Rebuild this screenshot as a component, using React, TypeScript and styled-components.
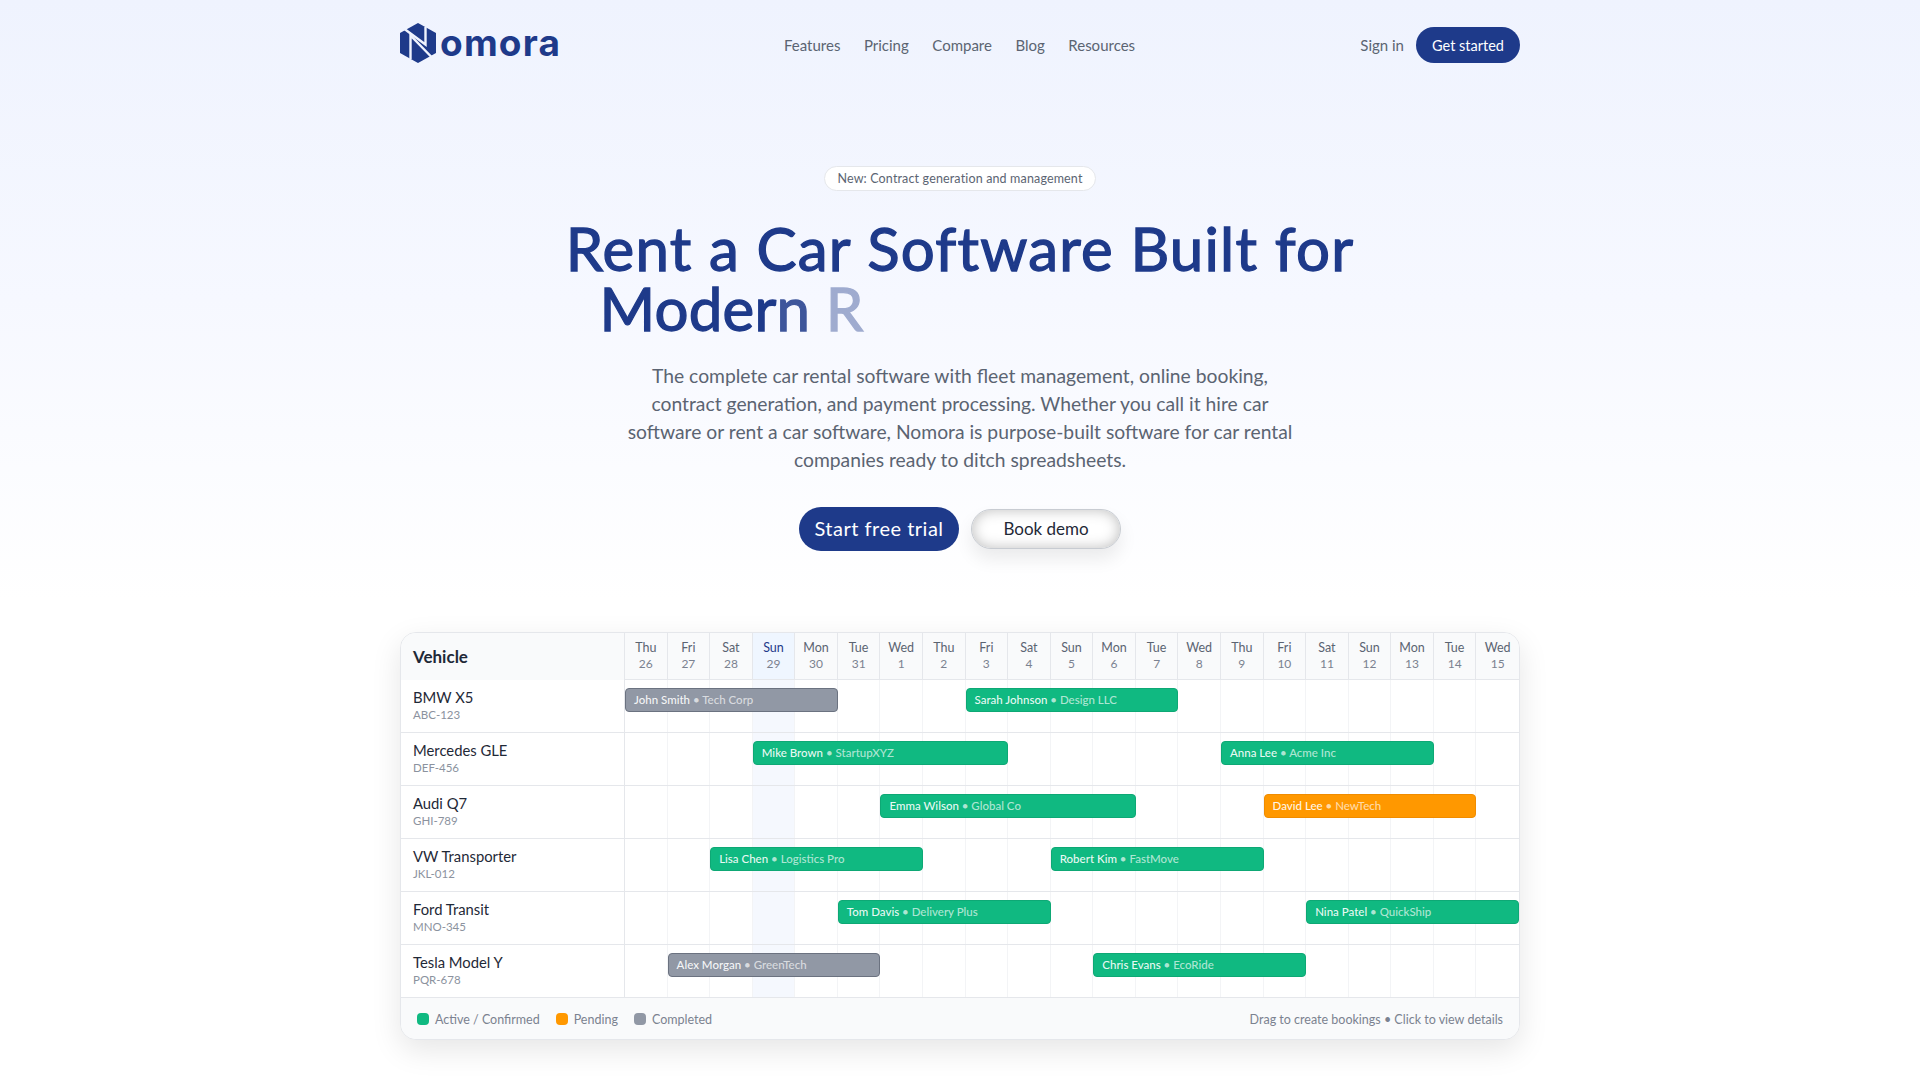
import React from "react";
import styled, { createGlobalStyle } from "styled-components";

const GlobalStyle = createGlobalStyle`
  html, body {
    margin: 0;
    padding: 0;
    background: #fff;
    overflow: hidden;
  }
  body {
    font-family: "Lato", "Open Sans", sans-serif;
    color: #111827;
  }
  * {
    box-sizing: border-box;
  }
`;

type Tone = "green" | "orange" | "gray";

const navLinks = ["Features", "Pricing", "Compare", "Blog", "Resources"];

const days = [
  ["Thu", "26"],
  ["Fri", "27"],
  ["Sat", "28"],
  ["Sun", "29"],
  ["Mon", "30"],
  ["Tue", "31"],
  ["Wed", "1"],
  ["Thu", "2"],
  ["Fri", "3"],
  ["Sat", "4"],
  ["Sun", "5"],
  ["Mon", "6"],
  ["Tue", "7"],
  ["Wed", "8"],
  ["Thu", "9"],
  ["Fri", "10"],
  ["Sat", "11"],
  ["Sun", "12"],
  ["Mon", "13"],
  ["Tue", "14"],
  ["Wed", "15"],
];

const TODAY = 3;

type Booking = { start: number; span: number; name: string; company: string; tone: Tone };

const vehicles: { name: string; plate: string; bookings: Booking[] }[] = [
  {
    name: "BMW X5",
    plate: "ABC-123",
    bookings: [
      { start: 0, span: 5, name: "John Smith", company: "Tech Corp", tone: "gray" },
      { start: 8, span: 5, name: "Sarah Johnson", company: "Design LLC", tone: "green" },
    ],
  },
  {
    name: "Mercedes GLE",
    plate: "DEF-456",
    bookings: [
      { start: 3, span: 6, name: "Mike Brown", company: "StartupXYZ", tone: "green" },
      { start: 14, span: 5, name: "Anna Lee", company: "Acme Inc", tone: "green" },
    ],
  },
  {
    name: "Audi Q7",
    plate: "GHI-789",
    bookings: [
      { start: 6, span: 6, name: "Emma Wilson", company: "Global Co", tone: "green" },
      { start: 15, span: 5, name: "David Lee", company: "NewTech", tone: "orange" },
    ],
  },
  {
    name: "VW Transporter",
    plate: "JKL-012",
    bookings: [
      { start: 2, span: 5, name: "Lisa Chen", company: "Logistics Pro", tone: "green" },
      { start: 10, span: 5, name: "Robert Kim", company: "FastMove", tone: "green" },
    ],
  },
  {
    name: "Ford Transit",
    plate: "MNO-345",
    bookings: [
      { start: 5, span: 5, name: "Tom Davis", company: "Delivery Plus", tone: "green" },
      { start: 16, span: 5, name: "Nina Patel", company: "QuickShip", tone: "green" },
    ],
  },
  {
    name: "Tesla Model Y",
    plate: "PQR-678",
    bookings: [
      { start: 1, span: 5, name: "Alex Morgan", company: "GreenTech", tone: "gray" },
      { start: 11, span: 5, name: "Chris Evans", company: "EcoRide", tone: "green" },
    ],
  },
];

const toneColors: Record<Tone, { bg: string; border: string }> = {
  green: { bg: "#10b981", border: "#0ea875" },
  orange: { bg: "#ff9800", border: "#f08c00" },
  gray: { bg: "#9198a5", border: "#6b7280" },
};

function LogoMark() {
  return (
    <svg width="36" height="40" viewBox="0 0 36 40" aria-hidden="true">
      <path d="M18 0 36 10V30L18 40 0 30V10Z" fill="#1e3a8a" />
      <path d="M4.5 6 25.5 21.5V4" fill="none" stroke="#eff3fe" strokeWidth="2.4" />
      <path d="M10.5 36V12.5L31.5 34" fill="none" stroke="#eff3fe" strokeWidth="2.4" />
    </svg>
  );
}

export default function App() {
  return (
    <Page>
      <GlobalStyle />
      <Wrap>
        <Nav>
          <Logo>
            <LogoMark />
            <LogoWord>omora</LogoWord>
          </Logo>
          <NavLinks>
            {navLinks.map((link) => (
              <NavLink key={link}>{link}</NavLink>
            ))}
          </NavLinks>
          <NavActions>
            <NavLink>Sign in</NavLink>
            <GetStarted>Get started</GetStarted>
          </NavActions>
        </Nav>

        <Hero>
          <Pill>New: Contract generation and management</Pill>
          <Heading>
            <HeadingLine>Rent a Car Software Built for</HeadingLine>
            <TypedLine>
              Moder
              <FadeN>n</FadeN>
              <FadeR> R</FadeR>
              <TypingGap />
            </TypedLine>
          </Heading>
          <Lead>
            The complete car rental software with fleet management, online booking,
            <br />
            contract generation, and payment processing. Whether you call it hire car
            <br />
            software or rent a car software, Nomora is purpose-built software for car rental
            <br />
            companies ready to ditch spreadsheets.
          </Lead>
          <Actions>
            <PrimaryButton>Start free trial</PrimaryButton>
            <GhostButton>Book demo</GhostButton>
          </Actions>
        </Hero>

        <Gantt>
          <HeaderRow>
            <VehicleHead>Vehicle</VehicleHead>
            <Timeline>
              {days.map(([day, num], i) => (
                <DayCell key={`${day}${num}`} $today={i === TODAY}>
                  <DayName $today={i === TODAY}>{day}</DayName>
                  <DayNum>{num}</DayNum>
                </DayCell>
              ))}
            </Timeline>
          </HeaderRow>
          {vehicles.map((vehicle) => (
            <Row key={vehicle.plate}>
              <VehicleCell>
                <VehicleName>{vehicle.name}</VehicleName>
                <Plate>{vehicle.plate}</Plate>
              </VehicleCell>
              <Timeline>
                {days.map(([day, num], i) => (
                  <GridCell key={`${day}${num}`} $col={i} $today={i === TODAY} />
                ))}
                {vehicle.bookings.map((b) => (
                  <Bar key={b.name} $tone={b.tone} $start={b.start} $span={b.span}>
                    {b.name}
                    <Company> • {b.company}</Company>
                  </Bar>
                ))}
              </Timeline>
            </Row>
          ))}
          <Legend>
            <LegendItems>
              <LegendItem>
                <Swatch $tone="green" />
                Active / Confirmed
              </LegendItem>
              <LegendItem>
                <Swatch $tone="orange" />
                Pending
              </LegendItem>
              <LegendItem>
                <Swatch $tone="gray" />
                Completed
              </LegendItem>
            </LegendItems>
            <LegendHint>Drag to create bookings • Click to view details</LegendHint>
          </Legend>
        </Gantt>
      </Wrap>
    </Page>
  );
}

const Page = styled.div`
  height: 1080px;
  overflow: hidden;
  background: linear-gradient(180deg, #eff3fe 0%, #f6f8ff 300px, #ffffff 600px);
`;

const Wrap = styled.div`
  width: 1120px;
  margin: 0 auto;
`;

const Nav = styled.nav`
  display: grid;
  grid-template-columns: 384px 1fr auto;
  align-items: center;
  height: 90px;
`;

const Logo = styled.div`
  display: flex;
  align-items: center;
  gap: 4px;
  margin-top: -4px;
`;

const LogoWord = styled.span`
  font-family: "Inter", sans-serif;
  font-size: 37px;
  font-weight: 700;
  line-height: 40px;
  color: #1e3a8a;
  letter-spacing: 1.2px;
`;

const NavLinks = styled.div`
  display: flex;
  align-items: center;
  gap: 23.5px;
`;

const NavLink = styled.a`
  font-size: 15px;
  color: #5b6472;
`;

const NavActions = styled.div`
  display: flex;
  align-items: center;
  gap: 12px;
`;

const GetStarted = styled.button`
  width: 104px;
  height: 36px;
  border: 0;
  border-radius: 18px;
  background: #1e3a8a;
  color: #fff;
  font-family: inherit;
  font-size: 14.5px;
`;

const Hero = styled.section`
  display: flex;
  flex-direction: column;
  align-items: center;
  padding-top: 76px;
`;

const Pill = styled.div`
  height: 25px;
  display: flex;
  align-items: center;
  padding: 0 12px;
  border: 1px solid #e5e7eb;
  border-radius: 13px;
  background: #fff;
  font-size: 12.5px;
  color: #5b6472;
  letter-spacing: 0.15px;
`;

const Heading = styled.h1`
  width: 100%;
  margin: 27px 0 0;
  text-align: center;
  font-size: 60px;
  line-height: 60px;
  font-weight: 400;
  letter-spacing: 1.2px;
  color: #1e3a8a;
  -webkit-text-stroke: 1.3px #1e3a8a;
`;

const HeadingLine = styled.span`
  display: block;
`;

const TypedLine = styled(HeadingLine)`
  letter-spacing: 0.2px;
`;

const FadeN = styled.span`
  opacity: 0.85;
`;

const FadeR = styled.span`
  opacity: 0.4;
`;

const TypingGap = styled.span`
  display: inline-block;
  width: 457px;
`;

const Lead = styled.p`
  margin: 24px 0 0;
  text-align: center;
  font-size: 19.3px;
  line-height: 28px;
  color: #5b6472;
`;

const Actions = styled.div`
  display: flex;
  align-items: center;
  gap: 12px;
  margin-top: 33px;
`;

const PrimaryButton = styled.button`
  width: 160px;
  height: 44px;
  padding: 0 0 2px;
  border: 0;
  border-radius: 22px;
  background: #1e3a8a;
  color: #fff;
  font-family: inherit;
  font-size: 20px;
  letter-spacing: 0.5px;
`;

const GhostButton = styled.button`
  width: 150px;
  height: 40px;
  padding: 0 0 2px;
  border: 1px solid #c8ccd2;
  border-radius: 20px;
  background: #fff;
  color: #1f2937;
  font-family: inherit;
  font-size: 17px;
  box-shadow: inset 0 0 14px rgba(0, 0, 0, 0.26), 0 10px 18px rgba(0, 0, 0, 0.08);
`;

const Gantt = styled.section`
  margin-top: 81px;
  height: 408px;
  border: 1px solid #e5e7eb;
  border-radius: 16px;
  overflow: hidden;
  background: #fff;
  box-shadow: 0 10px 30px rgba(0, 0, 0, 0.1);
`;

const HeaderRow = styled.div`
  display: grid;
  grid-template-columns: 224px 1fr;
  height: 47px;
  background: #f9fafb;
`;

const VehicleHead = styled.div`
  display: flex;
  align-items: center;
  padding-left: 12px;
  font-size: 17px;
  font-weight: 700;
  color: #1f2937;
  border-right: 1px solid #e5e7eb;
`;

const Timeline = styled.div`
  display: grid;
  grid-template-columns: repeat(21, 1fr);
  grid-template-rows: 1fr;
  min-width: 0;
`;

const DayCell = styled.div<{ $today: boolean }>`
  display: flex;
  flex-direction: column;
  align-items: center;
  justify-content: center;
  border-right: 1px solid #e5e7eb;
  border-bottom: 1px solid #e5e7eb;
  background: ${(p) => (p.$today ? "#eff6ff" : "transparent")};
  &:last-child {
    border-right: 0;
  }
`;

const DayName = styled.span<{ $today: boolean }>`
  font-size: 12.5px;
  line-height: 16px;
  color: ${(p) => (p.$today ? "#1e3a8a" : "#5b6472")};
`;

const DayNum = styled.span`
  font-size: 12px;
  line-height: 16px;
  color: #7b8290;
`;

const Row = styled.div`
  display: grid;
  grid-template-columns: 224px 1fr;
  height: 53px;
  border-bottom: 1px solid #e5e7eb;
`;

const VehicleCell = styled.div`
  display: flex;
  flex-direction: column;
  justify-content: center;
  padding-left: 12px;
  border-right: 1px solid #e5e7eb;
`;

const VehicleName = styled.div`
  font-size: 14.8px;
  line-height: 19px;
  margin-top: -1px;
  color: #1f2937;
`;

const Plate = styled.div`
  font-size: 11.5px;
  line-height: 16px;
  color: #8b929e;
`;

const GridCell = styled.div<{ $col: number; $today: boolean }>`
  grid-row: 1;
  grid-column: ${(p) => p.$col + 1};
  border-right: 1px solid #f3f4f6;
  background: ${(p) => (p.$today ? "#f5f8fe" : "transparent")};
  &:nth-child(21) {
    border-right: 0;
  }
`;

const Bar = styled.div<{ $tone: Tone; $start: number; $span: number }>`
  grid-row: 1;
  grid-column: ${(p) => p.$start + 1} / span ${(p) => p.$span};
  align-self: start;
  z-index: 1;
  height: 24px;
  margin-top: 8px;
  padding: 0 0 2px 8px;
  display: flex;
  align-items: center;
  white-space: pre;
  overflow: hidden;
  border-radius: 4px;
  border: 1px solid ${(p) => toneColors[p.$tone].border};
  background: ${(p) => toneColors[p.$tone].bg};
  color: rgba(255, 255, 255, 0.92);
  font-size: 11.5px;
  font-weight: 500;
`;

const Company = styled.span`
  opacity: 0.72;
`;

const Legend = styled.div`
  display: flex;
  align-items: center;
  justify-content: space-between;
  height: 42px;
  padding: 0 16px;
  background: #f9fafb;
  font-size: 12.5px;
  color: #7b8290;
`;

const LegendItems = styled.div`
  display: flex;
  align-items: center;
  gap: 16px;
`;

const LegendItem = styled.div`
  display: flex;
  align-items: center;
  gap: 6px;
`;

const Swatch = styled.span<{ $tone: Tone }>`
  width: 12px;
  height: 12px;
  border-radius: 4px;
  background: ${(p) => toneColors[p.$tone].bg};
`;

const LegendHint = styled.div``;
